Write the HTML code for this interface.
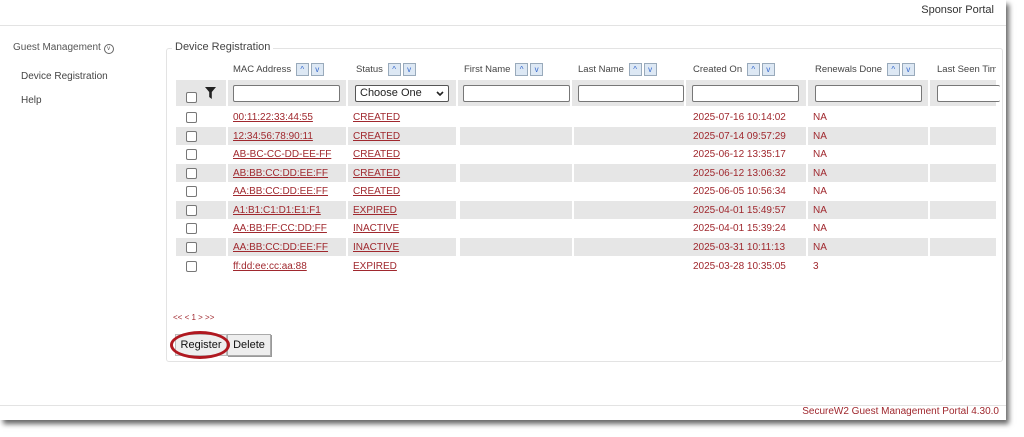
<!DOCTYPE html>
<html><head><style>
body{margin:0;width:1024px;height:437px;background:#fff;position:relative;overflow:hidden;font-family:"Liberation Sans",sans-serif;font-size:10px;color:#333}
.a{position:absolute}
.win{left:0;top:0;width:1006px;height:420px;background:#fff;box-shadow:3px 4px 5px rgba(0,0,0,.6)}
.r{position:absolute;left:176px;width:820px;height:18px}
.g .bg{position:absolute;top:0;height:18px;background:#e6e6e6}
.cell{position:absolute;top:0;height:18px;line-height:19px;color:#a0282e}
.u{text-decoration:underline}
.cb{position:absolute;left:10px;top:4px;width:9px;height:9px;border:1px solid #777;border-radius:2px;background:#fff}
.arr{display:inline-block;width:11px;height:11px;border:1px solid #9ab;background:#dde8f4;color:#36c;font-size:8px;line-height:11px;text-align:center;vertical-align:middle;margin-left:2px}
.h{position:absolute;top:63px;color:#444;font-size:9.5px;white-space:nowrap}
.in{position:absolute;top:85px;height:15px;border:1px solid #777;border-radius:2px;background:#fff}
.fc{position:absolute;top:80px;height:26px;background:#e6e6e6}
</style></head><body>
<div class="a win"></div>
<div class="a" style="left:0;top:25px;width:1006px;border-top:1px solid #e3e3e3"></div>
<div class="a" style="right:30px;top:4px;font-size:11px;color:#333">Sponsor Portal</div>
<div class="a" style="left:13px;top:42px;font-size:10px;color:#555">Guest Management <span style="display:inline-block;width:8px;height:8px;border:1px solid #666;border-radius:50%;font-size:6px;line-height:8px;text-align:center">v</span></div>
<div class="a" style="left:21px;top:71px;color:#444">Device Registration</div>
<div class="a" style="left:21px;top:95px;color:#444">Help</div>
<div class="a" style="left:166px;top:48px;width:835px;height:312px;border:1px solid #e3e3e3;border-radius:3px"></div>
<div class="a" style="left:172px;top:41px;background:#fff;padding:0 3px;font-size:11px;color:#444">Device Registration</div>
<div class="h" style="left:233px">MAC Address <span class="arr">^</span><span class="arr">v</span></div>
<div class="h" style="left:356px">Status <span class="arr">^</span><span class="arr">v</span></div>
<div class="h" style="left:464px">First Name <span class="arr">^</span><span class="arr">v</span></div>
<div class="h" style="left:578px">Last Name <span class="arr">^</span><span class="arr">v</span></div>
<div class="h" style="left:693px">Created On <span class="arr">^</span><span class="arr">v</span></div>
<div class="h" style="left:815px">Renewals Done <span class="arr">^</span><span class="arr">v</span></div>
<div class="h" style="left:937px;top:64px;width:59px;overflow:hidden">Last Seen Time</div>
<div class="fc" style="left:176px;width:50px"></div>
<div class="fc" style="left:228px;width:118px"></div>
<div class="fc" style="left:348px;width:108px"></div>
<div class="fc" style="left:458px;width:112px"></div>
<div class="fc" style="left:572px;width:112px"></div>
<div class="fc" style="left:686px;width:120px"></div>
<div class="fc" style="left:808px;width:120px"></div>
<div class="fc" style="left:930px;width:66px"></div>
<div class="a" style="left:186px;top:92px;width:9px;height:9px;border:1px solid #777;border-radius:2px;background:#fff"></div>
<svg class="a" style="left:205px;top:87px" width="11" height="12" viewBox="0 0 11 12"><path d="M0 0H11L6.8 5V12L4.2 10V5Z" fill="#222"/></svg>
<div class="in" style="left:233px;width:105px"></div>
<div class="a" style="left:355px;top:85px;width:88px;height:15px;border:1px solid #555;border-radius:2px;background:#fff;font-size:11px;line-height:15px;color:#222;padding-left:4px">Choose One<svg style="position:absolute;right:4px;top:5px" width="8" height="5" viewBox="0 0 8 5"><path d="M1 1L4 4L7 1" stroke="#222" stroke-width="1.6" fill="none"/></svg></div>
<div class="in" style="left:463px;width:105px"></div>
<div class="in" style="left:578px;width:104px"></div>
<div class="in" style="left:692px;width:105px"></div>
<div class="in" style="left:815px;width:105px"></div>
<div class="in" style="left:937px;width:62px;border-right:none"></div>

<div class="r" style="top:108px"><div class="cb"></div><div class="cell u" style="left:57px">00:11:22:33:44:55</div><div class="cell u" style="left:177px">CREATED</div><div class="cell" style="left:517px">2025-07-16 10:14:02</div><div class="cell" style="left:637px">NA</div></div>
<div class="r g" style="top:127px"><div class="bg" style="left:0;width:50px"></div><div class="bg" style="left:52px;width:118px"></div><div class="bg" style="left:172px;width:108px"></div><div class="bg" style="left:284px;width:112px"></div><div class="bg" style="left:398px;width:112px"></div><div class="bg" style="left:510px;width:120px"></div><div class="bg" style="left:632px;width:120px"></div><div class="bg" style="left:754px;width:66px"></div><div class="cb"></div><div class="cell u" style="left:57px">12:34:56:78:90:11</div><div class="cell u" style="left:177px">CREATED</div><div class="cell" style="left:517px">2025-07-14 09:57:29</div><div class="cell" style="left:637px">NA</div></div>
<div class="r" style="top:145px"><div class="cb"></div><div class="cell u" style="left:57px">AB-BC-CC-DD-EE-FF</div><div class="cell u" style="left:177px">CREATED</div><div class="cell" style="left:517px">2025-06-12 13:35:17</div><div class="cell" style="left:637px">NA</div></div>
<div class="r g" style="top:164px"><div class="bg" style="left:0;width:50px"></div><div class="bg" style="left:52px;width:118px"></div><div class="bg" style="left:172px;width:108px"></div><div class="bg" style="left:284px;width:112px"></div><div class="bg" style="left:398px;width:112px"></div><div class="bg" style="left:510px;width:120px"></div><div class="bg" style="left:632px;width:120px"></div><div class="bg" style="left:754px;width:66px"></div><div class="cb"></div><div class="cell u" style="left:57px">AB:BB:CC:DD:EE:FF</div><div class="cell u" style="left:177px">CREATED</div><div class="cell" style="left:517px">2025-06-12 13:06:32</div><div class="cell" style="left:637px">NA</div></div>
<div class="r" style="top:182px"><div class="cb"></div><div class="cell u" style="left:57px">AA:BB:CC:DD:EE:FF</div><div class="cell u" style="left:177px">CREATED</div><div class="cell" style="left:517px">2025-06-05 10:56:34</div><div class="cell" style="left:637px">NA</div></div>
<div class="r g" style="top:201px"><div class="bg" style="left:0;width:50px"></div><div class="bg" style="left:52px;width:118px"></div><div class="bg" style="left:172px;width:108px"></div><div class="bg" style="left:284px;width:112px"></div><div class="bg" style="left:398px;width:112px"></div><div class="bg" style="left:510px;width:120px"></div><div class="bg" style="left:632px;width:120px"></div><div class="bg" style="left:754px;width:66px"></div><div class="cb"></div><div class="cell u" style="left:57px">A1:B1:C1:D1:E1:F1</div><div class="cell u" style="left:177px">EXPIRED</div><div class="cell" style="left:517px">2025-04-01 15:49:57</div><div class="cell" style="left:637px">NA</div></div>
<div class="r" style="top:219px"><div class="cb"></div><div class="cell u" style="left:57px">AA:BB:FF:CC:DD:FF</div><div class="cell u" style="left:177px">INACTIVE</div><div class="cell" style="left:517px">2025-04-01 15:39:24</div><div class="cell" style="left:637px">NA</div></div>
<div class="r g" style="top:238px"><div class="bg" style="left:0;width:50px"></div><div class="bg" style="left:52px;width:118px"></div><div class="bg" style="left:172px;width:108px"></div><div class="bg" style="left:284px;width:112px"></div><div class="bg" style="left:398px;width:112px"></div><div class="bg" style="left:510px;width:120px"></div><div class="bg" style="left:632px;width:120px"></div><div class="bg" style="left:754px;width:66px"></div><div class="cb"></div><div class="cell u" style="left:57px">AA:BB:CC:DD:EE:FF</div><div class="cell u" style="left:177px">INACTIVE</div><div class="cell" style="left:517px">2025-03-31 10:11:13</div><div class="cell" style="left:637px">NA</div></div>
<div class="r" style="top:257px"><div class="cb"></div><div class="cell u" style="left:57px">ff:dd:ee:cc:aa:88</div><div class="cell u" style="left:177px">EXPIRED</div><div class="cell" style="left:517px">2025-03-28 10:35:05</div><div class="cell" style="left:637px">3</div></div>

<div class="a" style="left:173px;top:313px;font-size:8px;color:#a0282e">&lt;&lt; &lt; 1 &gt; &gt;&gt;</div>
<div class="a" style="left:175px;top:334px;width:50px;height:20px;background:#eee;border:1px solid #bbb;font-size:11px;line-height:20px;text-align:center;color:#111">Register</div>
<div class="a" style="left:227px;top:334px;width:42px;height:20px;background:#eee;border:1px solid #aaa;font-size:11px;line-height:20px;text-align:center;color:#111;box-shadow:1px 1px 0 #999">Delete</div>
<div class="a" style="left:170px;top:331px;width:54px;height:22px;border:3px solid #b01820;border-radius:50%"></div>
<div class="a" style="left:0;top:405px;width:1006px;border-top:1px solid #e3e3e3"></div>
<div class="a" style="right:25px;top:406px;font-size:10px;color:#a0282e">SecureW2 Guest Management Portal 4.30.0</div>
</body></html>
